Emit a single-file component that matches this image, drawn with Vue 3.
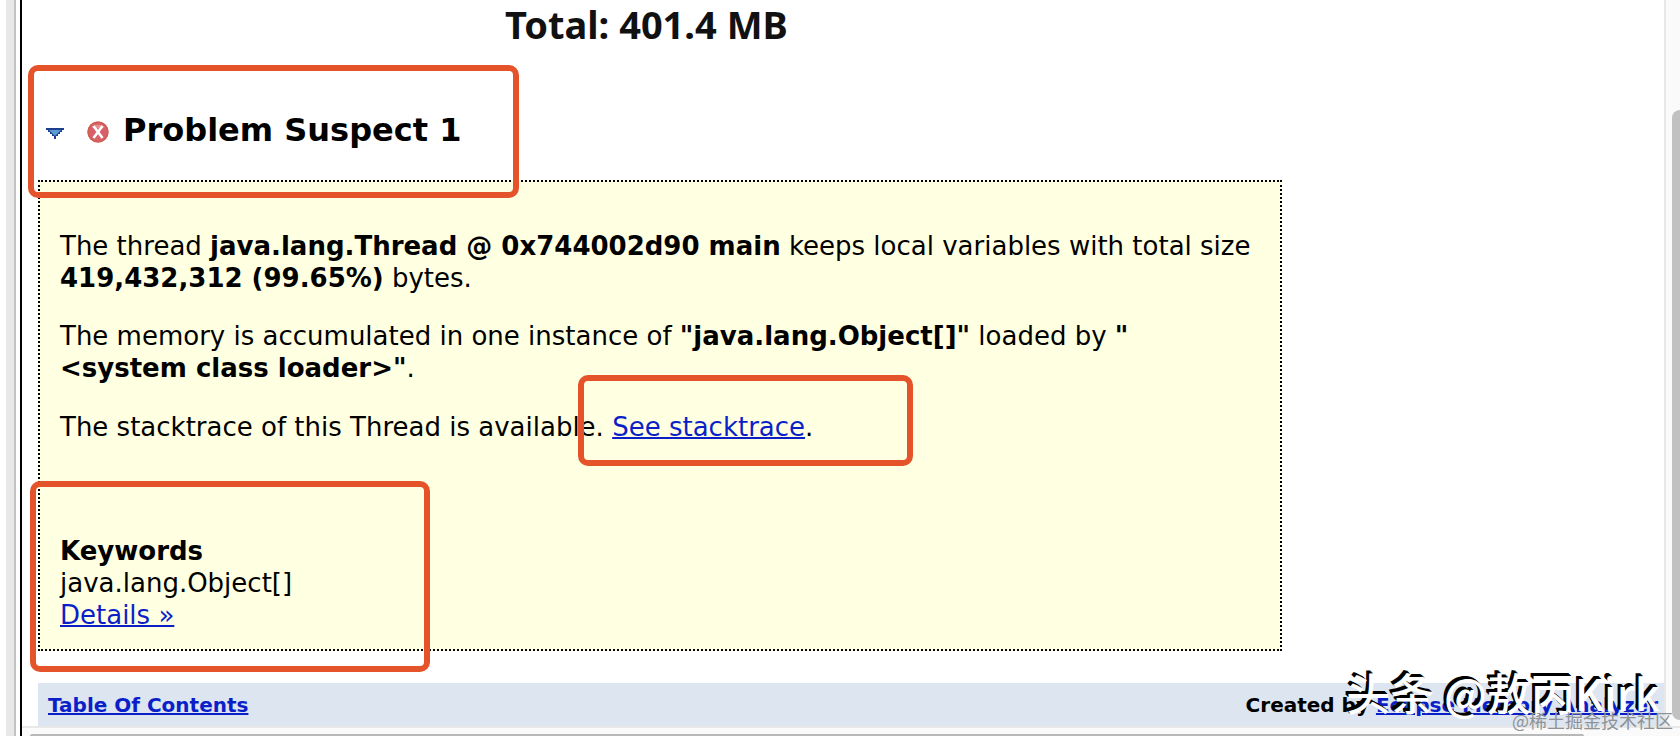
<script setup>
const stackHref = '#stacktrace'
</script>

<template>
  <div class="window">
    <div class="gutter"></div>
    <div class="pane">
      <div class="row">
        <main class="report">
          <p class="total">Total: 401.4 MB</p>
          <div class="heading">
            <button class="toggle" type="button" aria-label="Collapse section">
              <svg width="18" height="11" viewBox="0 0 18 11">
                <path d="M0 0h18v2h-2v2h-2v2h-2v2h-2v3H8V8H6V6H4V4H2V2H0z" fill="#1d3f8f" />
                <path d="M3 2h12L9 8z" fill="#5b9bd0" />
              </svg>
            </button>
            <svg class="error" width="22" height="22" viewBox="0 0 22 22">
              <circle cx="11" cy="11" r="10.5" fill="#d9606a" />
              <circle cx="11" cy="11" r="9.8" fill="none" stroke="#cf5f50" stroke-width="1.6" />
              <path d="M4 6q7-5 14 0-7 3-14 0" fill="#e58f90" />
              <path d="M6.500 5L15.500 17M15.500 5L6.500 17" stroke="#fff" stroke-width="2.6" />
            </svg>
            <h2>Problem Suspect 1</h2>
            <span class="mark mark-heading"></span>
          </div>
          <section class="suspect">
            <p>The thread <b>java.lang.Thread @ 0x744002d90 main</b> keeps local variables with total size <b>419,432,312 (99.65%)</b> bytes.</p>
            <p>The memory is accumulated in one instance of <b>"java.lang.Object[]"</b> loaded by <b>"<br />&lt;system class loader&gt;"</b>.</p>
            <p>The stacktrace of this Thread is available. <span class="anchor"><a :href="stackHref">See stacktrace</a><span class="mark mark-stack"></span></span>.</p>
            <div class="keywords">
              <b>Keywords</b>
              <span>java.lang.Object[]</span>
              <a href="#details">Details »</a>
              <span class="mark mark-keywords"></span>
            </div>
          </section>
          <footer class="footer">
            <a href="#toc">Table Of Contents</a>
            <span>Created by <a href="#mat">Eclipse Memory Analyzer</a></span>
          </footer>
        </main>
        <div class="vbar"><div class="vthumb"></div></div>
      </div>
      <div class="hbar"><div class="hthumb"></div></div>
    </div>
    <div class="stamp">头条 @敖丙Kirk</div>
    <div class="credit">@稀土掘金技术社区</div>
  </div>
</template>

<style>
html, body { margin: 0; background: #fff; }
body { overflow: hidden; }
</style>

<style scoped>
.window {
  position: relative;
  display: flex;
  height: 100vh;
  overflow: hidden;
  background: #fff;
  color: #000;
  font: 26px/32px "DejaVu Sans", Verdana, sans-serif;
}
.gutter {
  box-sizing: border-box;
  flex: none;
  width: 10px;
  margin: 0 4px 0 6px;
  background: #e8e8e8;
  border-right: 2px solid #c2c2c2;
}
.pane {
  flex: 1;
  min-width: 0;
  display: flex;
  flex-direction: column;
  border-left: 2px solid #000;
}
.row { display: flex; flex: 1; min-height: 0; }
.report { flex: 1; min-width: 0; padding-left: 16px; }
.total {
  margin: 0;
  padding: 0 0 2px 467px;
  font: bold 38px/48px "Noto Sans", sans-serif;
  color: #111;
}
.heading {
  position: relative;
  display: flex;
  align-items: center;
  height: 40px;
  margin: 60px 0 30px;
  padding-left: 8px;
}
.toggle {
  display: flex;
  width: 18px;
  margin-top: 6px;
  padding: 0;
  border: 0;
  background: none;
}
.error { margin: 4px 0 0 23px; }
h2 { margin: 0 0 0 14px; font-size: 32px; line-height: 40px; }
.suspect {
  box-sizing: border-box;
  width: calc(75% + 24px);
  padding: 24px 20px 18px;
  border: 2px dotted #000;
  background: #ffffe1;
}
.suspect p { margin: 0; padding: 26px 0 0; }
.suspect p:first-child { padding-top: 24px; }
.suspect p:nth-child(3) { padding-top: 27px; }
a { color: #0b1fc9; text-decoration-thickness: 2px; }
.anchor { position: relative; }
.keywords {
  position: relative;
  display: flex;
  flex-direction: column;
  align-items: flex-start;
  margin-top: 92px;
}
.footer {
  display: flex;
  justify-content: space-between;
  margin-top: 32px;
  padding: 6px 6px 6px 10px;
  background: #dce5f0;
  font-size: 20px;
  font-weight: bold;
}
.vbar {
  box-sizing: border-box;
  width: 16px;
  padding: 110px 0 6px 6px;
  border-left: 2px solid #e8e8e8;
  background: #fafafa;
}
.vthumb { height: 100%; border-radius: 8px 0 0 8px; background: #c1c1c1; }
.hbar {
  box-sizing: border-box;
  height: 10px;
  padding: 6px 96px 0 8px;
  border-top: 2px solid #e8e8e8;
  background: #fafafa;
}
.hthumb { height: 2px; border-radius: 4px 4px 0 0; background: #b8b8b8; }
.mark {
  box-sizing: border-box;
  position: absolute;
  border: 6px solid #e5532b;
  border-radius: 10px;
  pointer-events: none;
}
.mark-heading { left: -10px; top: -45px; width: 491px; height: 133px; }
.mark-stack { left: -34px; top: -37px; width: 335px; height: 91px; }
.mark-keywords { left: -30px; top: -54px; width: 400px; height: 191px; }
.stamp {
  position: absolute;
  right: 20px;
  bottom: 14px;
  color: #fff;
  font: 500 44px/60px "Noto Sans CJK SC", sans-serif;
  text-shadow: -1px -1px 0 #000, -2px -2px 0 #000, -3px -3px 0 #000;
}
.credit {
  position: absolute;
  right: 7px;
  bottom: 4px;
  color: #8f9296;
  font: 18px/24px "Noto Sans CJK SC", sans-serif;
}
</style>
